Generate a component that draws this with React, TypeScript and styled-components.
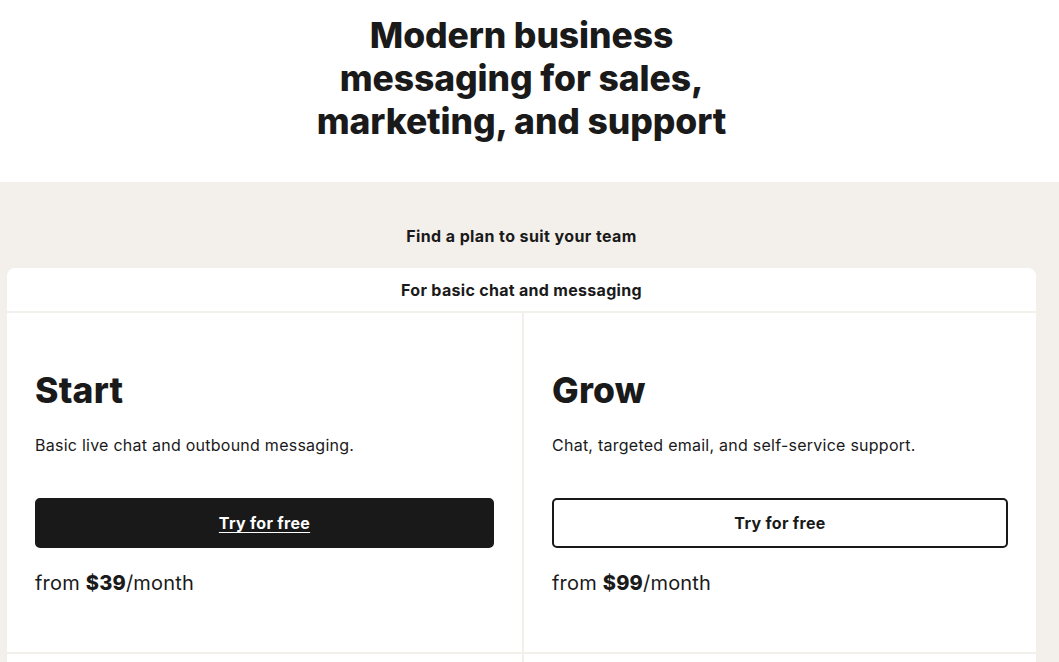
import styled, { createGlobalStyle } from "styled-components";

const GlobalStyle = createGlobalStyle`
  html, body {
    margin: 0;
    padding: 0;
    background: #ffffff;
    color: #1a1a1a;
    font-family: "Inter", "Liberation Sans", sans-serif;
  }
  * {
    box-sizing: border-box;
  }
`;

const plans = [
  {
    name: "Start",
    description: "Basic live chat and outbound messaging.",
    price: "$39",
    primary: true,
  },
  {
    name: "Grow",
    description: "Chat, targeted email, and self-service support.",
    price: "$99",
    primary: false,
  },
];

const Hero = styled.header`
  height: 182px;
  padding: 14px 23px 0 7px;
  display: flex;
  justify-content: center;
`;

const HeroTitle = styled.h1`
  margin: 0;
  width: 450px;
  text-align: center;
  font-size: 35.5px;
  line-height: 43px;
  font-weight: 800;
  letter-spacing: -0.1px;
`;

const Section = styled.section`
  background: #f3f0eb;
  padding: 44px 23px 0 7px;
`;

const SectionLabel = styled.h2`
  margin: 0 0 22px;
  text-align: center;
  font-size: 16px;
  line-height: 20px;
  font-weight: 700;
  letter-spacing: 0.4px;
`;

const Card = styled.div`
  background: #ffffff;
  border-radius: 8px 8px 0 0;
  overflow: hidden;
`;

const CardHeader = styled.div`
  height: 45px;
  display: flex;
  align-items: center;
  justify-content: center;
  font-size: 16px;
  font-weight: 700;
  letter-spacing: 0.3px;
  border-bottom: 2px solid #f3f0eb;
`;

const Columns = styled.div`
  display: grid;
  grid-template-columns: 515px 1fr;
`;

const Column = styled.div<{ $divider?: boolean }>`
  padding: 58px 28px 56px 28px;
  border-left: ${(p) => (p.$divider ? "2px solid #f3f0eb" : "none")};
  border-bottom: 2px solid #f3f0eb;
`;

const FeatureCell = styled.div<{ $divider?: boolean }>`
  min-height: 120px;
  border-left: ${(p) => (p.$divider ? "2px solid #f3f0eb" : "none")};
`;

const PlanName = styled.h3`
  margin: 0;
  font-size: 35.5px;
  line-height: 40px;
  font-weight: 800;
  letter-spacing: 0.2px;
`;

const PlanDescription = styled.p`
  margin: 23px 0 0;
  font-size: 16px;
  line-height: 22px;
  font-weight: 400;
  letter-spacing: 0.25px;
`;

const TryButton = styled.a<{ $primary?: boolean }>`
  margin-top: 42px;
  height: 50px;
  display: flex;
  align-items: center;
  justify-content: center;
  border-radius: 5px;
  border: 2px solid #191919;
  background: ${(p) => (p.$primary ? "#191919" : "#ffffff")};
  color: ${(p) => (p.$primary ? "#ffffff" : "#191919")};
  text-decoration: ${(p) => (p.$primary ? "underline" : "none")};
  text-underline-offset: 3px;
  font-size: 16px;
  font-weight: 700;
  letter-spacing: 0.3px;
  cursor: pointer;
`;

const Price = styled.p`
  margin: 22px 0 0;
  font-size: 20px;
  line-height: 26px;
  font-weight: 400;
  letter-spacing: 0.2px;

  strong {
    font-weight: 800;
  }
`;

export default function App() {
  return (
    <>
      <GlobalStyle />
      <Hero>
        <HeroTitle>Modern business messaging for sales, marketing, and support</HeroTitle>
      </Hero>
      <Section>
        <SectionLabel>Find a plan to suit your team</SectionLabel>
        <Card>
          <CardHeader>For basic chat and messaging</CardHeader>
          <Columns>
            {plans.map((plan, i) => (
              <Column key={plan.name} $divider={i > 0}>
                <PlanName>{plan.name}</PlanName>
                <PlanDescription>{plan.description}</PlanDescription>
                <TryButton $primary={plan.primary}>Try for free</TryButton>
                <Price>
                  from <strong>{plan.price}</strong>/month
                </Price>
              </Column>
            ))}
            {plans.map((plan, i) => (
              <FeatureCell key={`${plan.name}-features`} $divider={i > 0} />
            ))}
          </Columns>
        </Card>
      </Section>
    </>
  );
}
